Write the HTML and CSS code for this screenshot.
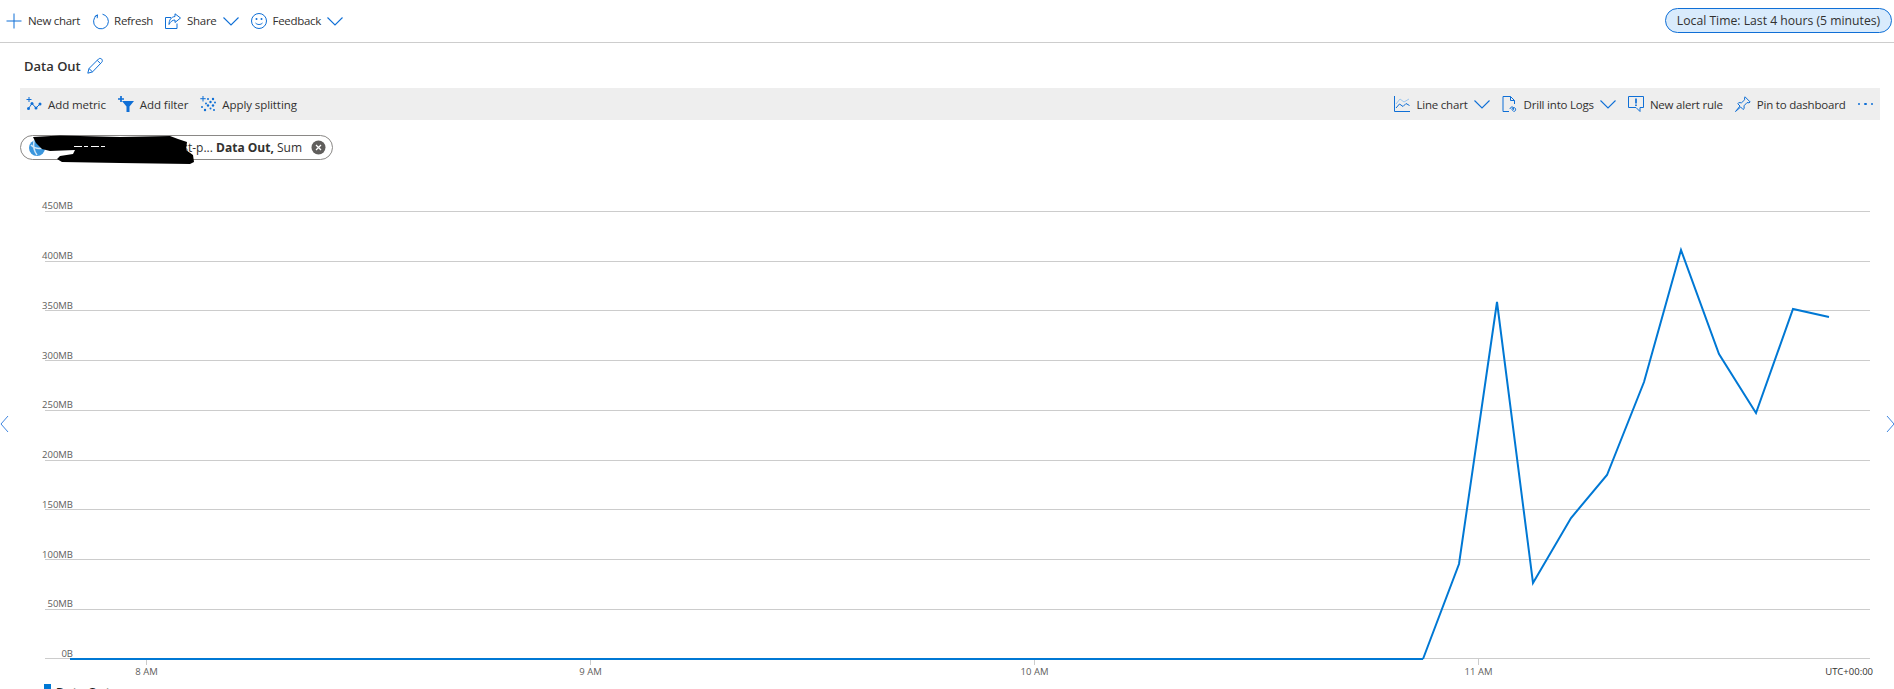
FILE: index.html
```html
<!DOCTYPE html>
<html lang="en">
<head>
<meta charset="utf-8">
<title>Data Out</title>
<link rel="stylesheet" href="styles.css">
</head>
<body>
<header class="topbar">
  <div class="actions">
    <span class="action"><svg class="icon" viewBox="0 0 16 16"><path d="M8 .5v15M.5 8h15"/></svg>New chart</span>
    <span class="action"><svg class="icon" viewBox="0 0 16 16"><path d="M5 2.200A7.400 7.400 0 1 0 10.500 1.200M2.600 3.600 5.500 1.800 5.200 5.200"/></svg>Refresh</span>
    <span class="action"><svg class="icon" viewBox="0 0 16 16"><path d="M6 4.500H.5v11h11.500v-5M15.500 5 10 .8v2.700C6 4 4 7 4 11.500 5.500 8.500 7.500 7 10 7v2.500z"/></svg>Share<svg class="chevron" viewBox="0 0 16 16"><path d="M.5 4.500 8 12 15.500 4.500"/></svg></span>
    <span class="action"><svg class="icon" viewBox="0 0 16 16"><circle cx="8" cy="8" r="7.500"/><circle class="dot" cx="5.500" cy="6" r="1"/><circle class="dot" cx="10.500" cy="6" r="1"/><path d="M4.500 10c2 2 5 2 7 0"/></svg>Feedback<svg class="chevron" viewBox="0 0 16 16"><path d="M.5 4.500 8 12 15.500 4.500"/></svg></span>
  </div>
  <span class="time-pill">Local Time: Last 4 hours (5 minutes)</span>
</header>

<div class="title-row">
  <h1 class="title">Data Out</h1>
  <svg class="icon" viewBox="0 0 16 16"><path d="M.8 15.200 2 10.500 11.500 1c1-1 2.500-.6 3.200.1s1 2.200 0 3.200L5.500 13.900zM2 10.500 5.500 13.900M10.300 2.400l3.300 3.300"/></svg>
</div>

<nav class="toolbar">
  <div class="tools">
    <span class="action"><svg class="icon" viewBox="0 0 16 16"><path d="M3 1v5M.5 3.500h5"/><path class="thin" d="M2.500 12.500 6 7.500l4 4.500 4-4"/><circle class="dot" cx="2.500" cy="12.500" r="1.500"/><circle class="dot" cx="6" cy="7.500" r="1.500"/><circle class="dot" cx="10" cy="12" r="1.500"/><circle class="dot" cx="14" cy="8" r="1.500"/></svg>Add metric</span>
    <span class="action"><svg class="icon" viewBox="0 0 16 16"><path class="solid" d="M4 5h12l-4.500 5.500V16h-3v-5.500z"/><path class="heavy" d="M3 0v6M0 3h6"/></svg>Add filter</span>
    <span class="action"><svg class="icon" viewBox="0 0 16 16"><path d="M3 0v5.500M.3 2.700h5.400"/><g class="dots"><circle cx="8" cy="3" r="1"/><circle cx="13" cy="3" r="1.200"/><circle cx="10.500" cy="6" r="1.200"/><circle cx="15" cy="6.500" r="1"/><circle cx="6" cy="7.500" r="1"/><circle cx="8" cy="9.500" r="1.200"/><circle cx="13" cy="9.500" r="1.200"/><circle cx="2" cy="11" r="1"/><circle cx="10.500" cy="12.500" r="1"/><circle cx="5" cy="14" r="1.200"/><circle cx="14" cy="14" r="1"/></g></svg>Apply splitting</span>
  </div>
  <div class="tools tools-right">
    <span class="action"><svg class="icon" viewBox="0 0 16 16"><path d="M.5 0v15.500H16"/><path class="pale" d="M2 8l4-5 4 3 5-3"/><path d="M2 12l3.500-4 3.500 2.500 3-3 3.500 2"/></svg>Line chart<svg class="chevron" viewBox="0 0 16 16"><path d="M.5 4.500 8 12 15.500 4.500"/></svg></span>
    <span class="action"><svg class="icon" viewBox="0 0 16 16"><path d="M7 15.500H1V.5h7.500L12.500 4.500V8M8.500.5v4h4"/><path d="M8 13c0-2 3-3 3.500-1s-1 3.500-1.500 1.500 3-2.500 3.500-1c.5 2-.5 3-2 3"/></svg>Drill into Logs<svg class="chevron" viewBox="0 0 16 16"><path d="M.5 4.500 8 12 15.500 4.500"/></svg></span>
    <span class="action"><svg class="icon" viewBox="0 0 16 16"><path d="M.5.500h15v11H12v4l-4-4H.5z"/><path class="heavy" d="M8 2.500v5M8 8.500v1.500"/></svg>New alert rule</span>
    <span class="action"><svg class="icon" viewBox="0 0 16 16"><path d="M10 .8 15.200 6l-1.200.8-2-.2-3 3.200.2 2.700-1.200 1-2.300-2.500L.5 15.500 5 10 2.800 7.800l1-1.200 2.700.2 3.200-3-.2-2z"/></svg>Pin to dashboard</span>
    <span class="more" aria-label="More"><i></i><i></i><i></i></span>
  </div>
</nav>

<div class="pill-row">
  <div class="metric-pill">
    <svg class="globe" viewBox="0 0 16 16"><circle cx="8" cy="8" r="8"/><path d="M2 5c3 3 8 4 12 3M5 1c-1 5 0 10 3 14"/></svg>
    <span class="metric-text">st-p... <b>Data Out,</b> Sum</span>
    <svg class="close" viewBox="0 0 15 15"><circle cx="7.500" cy="7.500" r="7"/><path d="M5 5l5 5M10 5l-5 5"/></svg>
  </div>
  <svg class="redaction" viewBox="25 130 175 40"><path d="M33 137 60 135.500 120 137 170 136 178 139 187 142 186 150 193 155 194 162 190 164 120 163 62 162 57 159 60 156 73 154 75 150 50 151 42 149 36 143z"/><path class="sliver" d="M74 146.500H107"/></svg>
</div>

<svg class="chart" viewBox="0 200 1894 489">
  <g class="grid">
    <path d="M45 211.500H1870M45 261.500H1870M45 310.500H1870M45 360.500H1870M45 410.500H1870M45 460.500H1870M45 509.500H1870M45 559.500H1870M45 609.500H1870M45 658.500H1870"/>
    <path d="M146.500 659v6M590.500 659v6M1034.500 659v6M1478.500 659v6"/>
  </g>
  <g class="y-labels">
    <text x="73" y="209">450MB</text>
    <text x="73" y="259">400MB</text>
    <text x="73" y="309">350MB</text>
    <text x="73" y="359">300MB</text>
    <text x="73" y="408">250MB</text>
    <text x="73" y="458">200MB</text>
    <text x="73" y="508">150MB</text>
    <text x="73" y="558">100MB</text>
    <text x="73" y="607">50MB</text>
    <text x="73" y="657">0B</text>
  </g>
  <g class="x-labels">
    <text x="146.500" y="675">8 AM</text>
    <text x="590.500" y="675">9 AM</text>
    <text x="1034.500" y="675">10 AM</text>
    <text x="1478.500" y="675">11 AM</text>
  </g>
  <text class="utc" x="1873" y="675">UTC+00:00</text>
  <path class="baseline" d="M70 659H1423"/>
  <polyline class="series" points="1423,659 1459,564 1497,302 1533,583 1571,518 1607,475 1644,382 1681,250 1719,354 1756,413 1793,309 1829,317"/>
  <path class="nav" d="M8 416 1 424 8 432M1887 416 1894 424 1887 432"/>
  <rect class="legend-mark" x="44" y="684" width="7" height="6"/>
  <text class="legend-text" x="56" y="697">Data Out</text>
</svg>
</body>
</html>
```
FILE: styles.css
```css
* { box-sizing: border-box; }
html, body { margin: 0; height: 689px; overflow: hidden; background: #fff; }
body { font-family: "Open Sans", "Noto Sans", sans-serif; font-size: 11.500px; color: #323130; }

.topbar {
  display: flex; align-items: center; justify-content: space-between;
  height: 43px; padding: 0 2px 1px 6px;
  border-bottom: 1px solid #cdcdcd;
}
.actions, .tools { display: flex; align-items: center; gap: 12px; }
.actions { letter-spacing: -0.3px; }
.tools { letter-spacing: -0.08px; }
.tools-right { letter-spacing: -0.2px; }
.action { display: flex; align-items: center; gap: 6px; white-space: nowrap; }

.icon { width: 16px; height: 16px; flex: none; overflow: visible; }
.icon path, .icon circle { fill: none; stroke: #0f6fd6; stroke-width: 1; }
.icon .dot { fill: #0f6fd6; stroke: none; }
.icon .solid { fill: #0f6fd6; stroke: none; }
.icon .heavy { stroke-width: 1.700; }
.icon .pale { stroke: #9cc6ee; }
.icon .dots circle { fill: #0f6fd6; stroke: none; }
.chevron { width: 16px; height: 16px; flex: none; }
.chevron path { fill: none; stroke: #0f6fd6; stroke-width: 1.100; }

.time-pill {
  display: flex; align-items: center; justify-content: center;
  width: 227px; height: 25px;
  background: #d9ebfc; border: 1px solid #0f6fd6; border-radius: 13px;
  font-size: 12.200px; white-space: nowrap;
}

.title-row { display: flex; align-items: center; gap: 6px; height: 45px; padding-left: 24px; }
.title { margin: 0; font-size: 13px; font-weight: 600; color: #323130; }

.toolbar {
  display: flex; align-items: center; justify-content: space-between;
  height: 32px; margin: 0 14px 0 20px; padding: 0 7px 0 6px;
  background: #eeeeee;
}

.pill-row { position: relative; padding: 15px 0 40px 20px; height: 80px; }
.metric-pill {
  display: flex; align-items: center;
  width: 313px; height: 25px; padding: 0 6px 0 8px;
  border: 1px solid #8a8886; border-radius: 13px; background: #fff;
}
.globe { width: 16px; height: 16px; flex: none; }
.globe circle { fill: #3a96dd; }
.globe path { fill: none; stroke: #cfe6f8; stroke-width: 1.500; }
.metric-text { margin-left: auto; white-space: nowrap; font-size: 12px; }
.metric-text b { font-weight: 700; }
.close { width: 15px; height: 15px; flex: none; margin-left: 9px; }
.close circle { fill: #605e5c; }
.close path { stroke: #fff; stroke-width: 1.300; }
.redaction { position: absolute; left: 25px; top: 10px; width: 175px; height: 40px; }
.redaction path { fill: #000; }
.redaction .sliver { fill: none; stroke: #fff; stroke-width: 1; stroke-dasharray: 8 2 4 3; }

.chart { display: block; width: 1894px; height: 489px; }
.grid path { fill: none; stroke: #cccccc; stroke-width: 1; }
.chart text { font-family: "Open Sans", "Noto Sans", sans-serif; }
.y-labels text { font-size: 9.500px; fill: #605e5c; text-anchor: end; }
.x-labels text { font-size: 9.500px; fill: #605e5c; text-anchor: middle; }
.utc { font-size: 9.500px; fill: #323130; text-anchor: end; }
.baseline { fill: none; stroke: #0078d4; stroke-width: 2; }
.series { fill: none; stroke: #0078d4; stroke-width: 2; stroke-linejoin: miter; }
.nav { fill: none; stroke: #3f86e0; stroke-width: 1; }
.legend-mark { fill: #0078d4; }
.legend-text { font-size: 12px; font-weight: 700; fill: #201f1e; }

.more { display: flex; gap: 4px; }
.more i { width: 2.500px; height: 2.500px; border-radius: 50%; background: #0f6fd6; }
```
